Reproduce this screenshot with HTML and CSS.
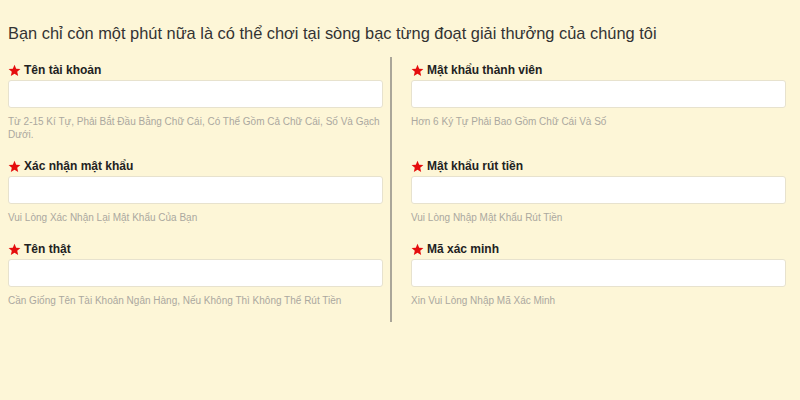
FILE: index.html
```html
<!DOCTYPE html>
<html lang="vi">
<head>
<meta charset="UTF-8">
<meta name="viewport" content="width=device-width, initial-scale=1.0">
<title>Đăng ký</title>
<link rel="stylesheet" href="styles.css">
</head>
<body>

<div class="container">
    <h2 class="page-title">Bạn chỉ còn một phút nữa là có thể chơi tại sòng bạc từng đoạt giải thưởng của chúng tôi</h2>

    <div class="reg-form">
        <div class="divider"></div>

        <div class="field">
            <label><svg class="star" viewBox="0 0 24 24"><path d="M12 1.5l3.1 7.2 7.8.6-5.9 5.1 1.8 7.6L12 18l-6.8 4 1.8-7.6L1.1 9.3l7.8-.6z"/></svg>Tên tài khoản</label>
            <input type="text">
            <p class="hint">Từ 2-15 Kí Tự, Phải Bắt Đầu Bằng Chữ Cái, Có Thể Gồm Cả Chữ Cái, Số Và Gạch Dưới.</p>
        </div>
        <div class="field">
            <label><svg class="star" viewBox="0 0 24 24"><path d="M12 1.5l3.1 7.2 7.8.6-5.9 5.1 1.8 7.6L12 18l-6.8 4 1.8-7.6L1.1 9.3l7.8-.6z"/></svg>Mật khẩu thành viên</label>
            <input type="password">
            <p class="hint">Hơn 6 Ký Tự Phải Bao Gồm Chữ Cái Và Số</p>
        </div>

        <div class="field">
            <label><svg class="star" viewBox="0 0 24 24"><path d="M12 1.5l3.1 7.2 7.8.6-5.9 5.1 1.8 7.6L12 18l-6.8 4 1.8-7.6L1.1 9.3l7.8-.6z"/></svg>Xác nhận mật khẩu</label>
            <input type="password">
            <p class="hint">Vui Lòng Xác Nhận Lại Mật Khẩu Của Bạn</p>
        </div>
        <div class="field">
            <label><svg class="star" viewBox="0 0 24 24"><path d="M12 1.5l3.1 7.2 7.8.6-5.9 5.1 1.8 7.6L12 18l-6.8 4 1.8-7.6L1.1 9.3l7.8-.6z"/></svg>Mật khẩu rút tiền</label>
            <input type="password">
            <p class="hint">Vui Lòng Nhập Mật Khẩu Rút Tiền</p>
        </div>

        <div class="field">
            <label><svg class="star" viewBox="0 0 24 24"><path d="M12 1.5l3.1 7.2 7.8.6-5.9 5.1 1.8 7.6L12 18l-6.8 4 1.8-7.6L1.1 9.3l7.8-.6z"/></svg>Tên thật</label>
            <input type="text">
            <p class="hint">Cần Giống Tên Tài Khoản Ngân Hàng, Nếu Không Thì Không Thể Rút Tiền</p>
        </div>
        <div class="field">
            <label><svg class="star" viewBox="0 0 24 24"><path d="M12 1.5l3.1 7.2 7.8.6-5.9 5.1 1.8 7.6L12 18l-6.8 4 1.8-7.6L1.1 9.3l7.8-.6z"/></svg>Mã xác minh</label>
            <input type="text">
            <p class="hint">Xin Vui Lòng Nhập Mã Xác Minh</p>
        </div>
    </div>
</div>

</body>
</html>
```

FILE: styles.css
```css
body {
    margin: 0;
    padding: 0;
    background-color: #fdf6d7;
    font-family: "Liberation Sans", Arial, sans-serif;
    color: #333;
}

.container {
    padding: 23px 14px 0 8px;
}

.page-title {
    margin: 0;
    font-size: 16.4px;
    font-weight: normal;
    line-height: 20px;
    color: #333;
}

/* 两列表单，中间一条竖线 */
.reg-form {
    display: grid;
    grid-template-columns: 1fr auto 1fr;
    grid-auto-flow: row dense;
    margin-top: 14px;
    padding: 5px 0 15px;
}

.divider {
    grid-column: 2;
    grid-row: 1 / 4;
    width: 2px;
    margin: -5px 19px -17px 7px;
    background-color: #aaa699;
}

.field {
    margin-bottom: 17px;
}

.field:nth-child(even) {
    grid-column: 1;
}

.field:nth-child(odd) {
    grid-column: 3;
}

.field:nth-last-child(-n+2) {
    margin-bottom: 0;
}

.field label {
    display: flex;
    align-items: center;
    height: 16px;
    margin-bottom: 2px;
    font-size: 12px;
    font-weight: bold;
    color: #222;
}

.star {
    width: 13px;
    height: 13px;
    margin-right: 3px;
    fill: #e50d0d;
}

.field input {
    display: block;
    width: 100%;
    height: 28px;
    box-sizing: border-box;
    border: 1px solid #e7e2ce;
    border-radius: 3px;
    background-color: #fff;
}

.hint {
    margin: 7px 0 0;
    font-size: 10px;
    line-height: 13px;
    color: #aba89f;
}
```
